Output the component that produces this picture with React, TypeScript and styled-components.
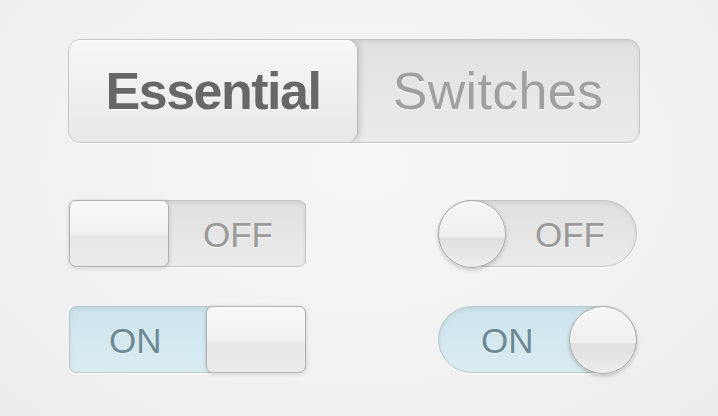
import React from 'react'
import styled, { createGlobalStyle } from 'styled-components'

const GlobalStyle = createGlobalStyle`
  html, body {
    margin: 0;
    padding: 0;
    background: #f2f2f2;
  }
  body {
    font-family: "Liberation Sans", Arial, Helvetica, sans-serif;
    -webkit-font-smoothing: antialiased;
  }
`

const Page = styled.div`
  width: 718px;
  height: 416px;
  box-sizing: border-box;
  padding: 39px 0 0 68px;
  background: radial-gradient(ellipse at 50% 40%, #f6f6f6 0%, #f1f1f1 70%, #ececec 100%);
`

const Panel = styled.div`
  width: 572px;
  display: flex;
  flex-direction: column;
  gap: 57px;
`

const Segmented = styled.div`
  display: grid;
  grid-template-columns: 288px 1fr;
  height: 104px;
  box-sizing: border-box;
  border: 1px solid #c6c6c6;
  border-radius: 12px;
  background: linear-gradient(#e1e1e1, #ebebeb);
  box-shadow: inset 0 2px 4px rgba(0, 0, 0, 0.08), 0 1px 0 #fff;
  overflow: hidden;
`

const Segment = styled.div<{ active?: boolean }>`
  display: flex;
  align-items: center;
  justify-content: center;
  font-size: 52px;
  font-weight: ${(p) => (p.active ? 700 : 400)};
  letter-spacing: ${(p) => (p.active ? '-1.5px' : '0.3px')};
  color: ${(p) => (p.active ? '#676767' : '#a0a0a0')};
  text-shadow: 0 1px 0 rgba(255, 255, 255, 0.8);
  border-radius: ${(p) => (p.active ? '11px' : '0')};
  background: ${(p) => (p.active ? 'linear-gradient(#f7f7f7, #e8e8e8)' : 'transparent')};
  box-shadow: ${(p) =>
    p.active
      ? 'inset 0 1px 0 #fff, 1px 0 0 #b8b8b8, 3px 0 6px rgba(0,0,0,0.14)'
      : 'none'};
  padding-bottom: 1px;
`

const Switches = styled.div`
  display: flex;
  flex-direction: column;
  gap: 39px;
`

const Row = styled.div`
  display: flex;
  justify-content: space-between;
  align-items: center;
  padding: 0 3px 0 1px;
`

const Track = styled.div<{ on?: boolean; round?: boolean; w: number }>`
  position: relative;
  width: ${(p) => p.w}px;
  height: 67px;
  box-sizing: border-box;
  display: flex;
  align-items: center;
  border: 1px solid ${(p) => (p.on ? '#b7c8ce' : '#c4c4c4')};
  border-radius: ${(p) => (p.round ? '34px' : '7px')};
  background: ${(p) =>
    p.on ? 'linear-gradient(#cde4ec, #d9ecf2)' : 'linear-gradient(#e0e0e0, #ebebeb)'};
  box-shadow: inset 0 2px 4px rgba(0, 0, 0, 0.08), 0 1px 0 #fff;
`

const Label = styled.span<{ on?: boolean; offset: number }>`
  position: absolute;
  top: 50%;
  transform: translateY(-50%);
  left: ${(p) => p.offset}px;
  font-size: 35px;
  line-height: 1;
  color: ${(p) => (p.on ? '#6d8993' : '#9a9a9a')};
  text-shadow: 0 1px 0 rgba(255, 255, 255, 0.7);
  padding-top: 1px;
`

const SquareKnob = styled.div<{ on?: boolean }>`
  position: absolute;
  top: -1px;
  bottom: -1px;
  ${(p) => (p.on ? 'right: -1px;' : 'left: -1px;')}
  width: 100px;
  box-sizing: border-box;
  border: 1px solid #b0b0b0;
  border-radius: 7px;
  background: linear-gradient(#f8f8f8 0%, #f1f1f1 50%, #e7e7e7 56%, #ececec 100%);
  box-shadow: inset 0 1px 0 #fff, 0 1px 4px rgba(0, 0, 0, 0.18);
`

const RoundKnob = styled.div<{ on?: boolean }>`
  position: absolute;
  top: -1px;
  ${(p) => (p.on ? 'right: -1px;' : 'left: -1px;')}
  width: 68px;
  height: 68px;
  box-sizing: border-box;
  border: 1px solid #aaaaaa;
  border-radius: 50%;
  background: linear-gradient(#f6f6f6 0%, #efefef 54%, #e0e0e0 56%, #e6e6e6 80%, #eeeeee 100%);
  box-shadow: inset 0 1px 1px #fff, 0 2px 4px rgba(0, 0, 0, 0.2);
`

const Switch = ({ on, round }: { on?: boolean; round?: boolean }) => {
  const w = round ? 199 : 237
  let offset
  if (round) offset = on ? 42 : 96
  else offset = on ? 39 : 133
  return (
    <Track on={on} round={round} w={w}>
      <Label on={on} offset={offset}>{on ? 'ON' : 'OFF'}</Label>
      {round ? <RoundKnob on={on} /> : <SquareKnob on={on} />}
    </Track>
  )
}

export default function App() {
  return (
    <>
      <GlobalStyle />
      <Page>
        <Panel>
          <Segmented>
            <Segment active>Essential</Segment>
            <Segment>Switches</Segment>
          </Segmented>
          <Switches>
            <Row>
              <Switch />
              <Switch round />
            </Row>
            <Row>
              <Switch on />
              <Switch on round />
            </Row>
          </Switches>
        </Panel>
      </Page>
    </>
  )
}
